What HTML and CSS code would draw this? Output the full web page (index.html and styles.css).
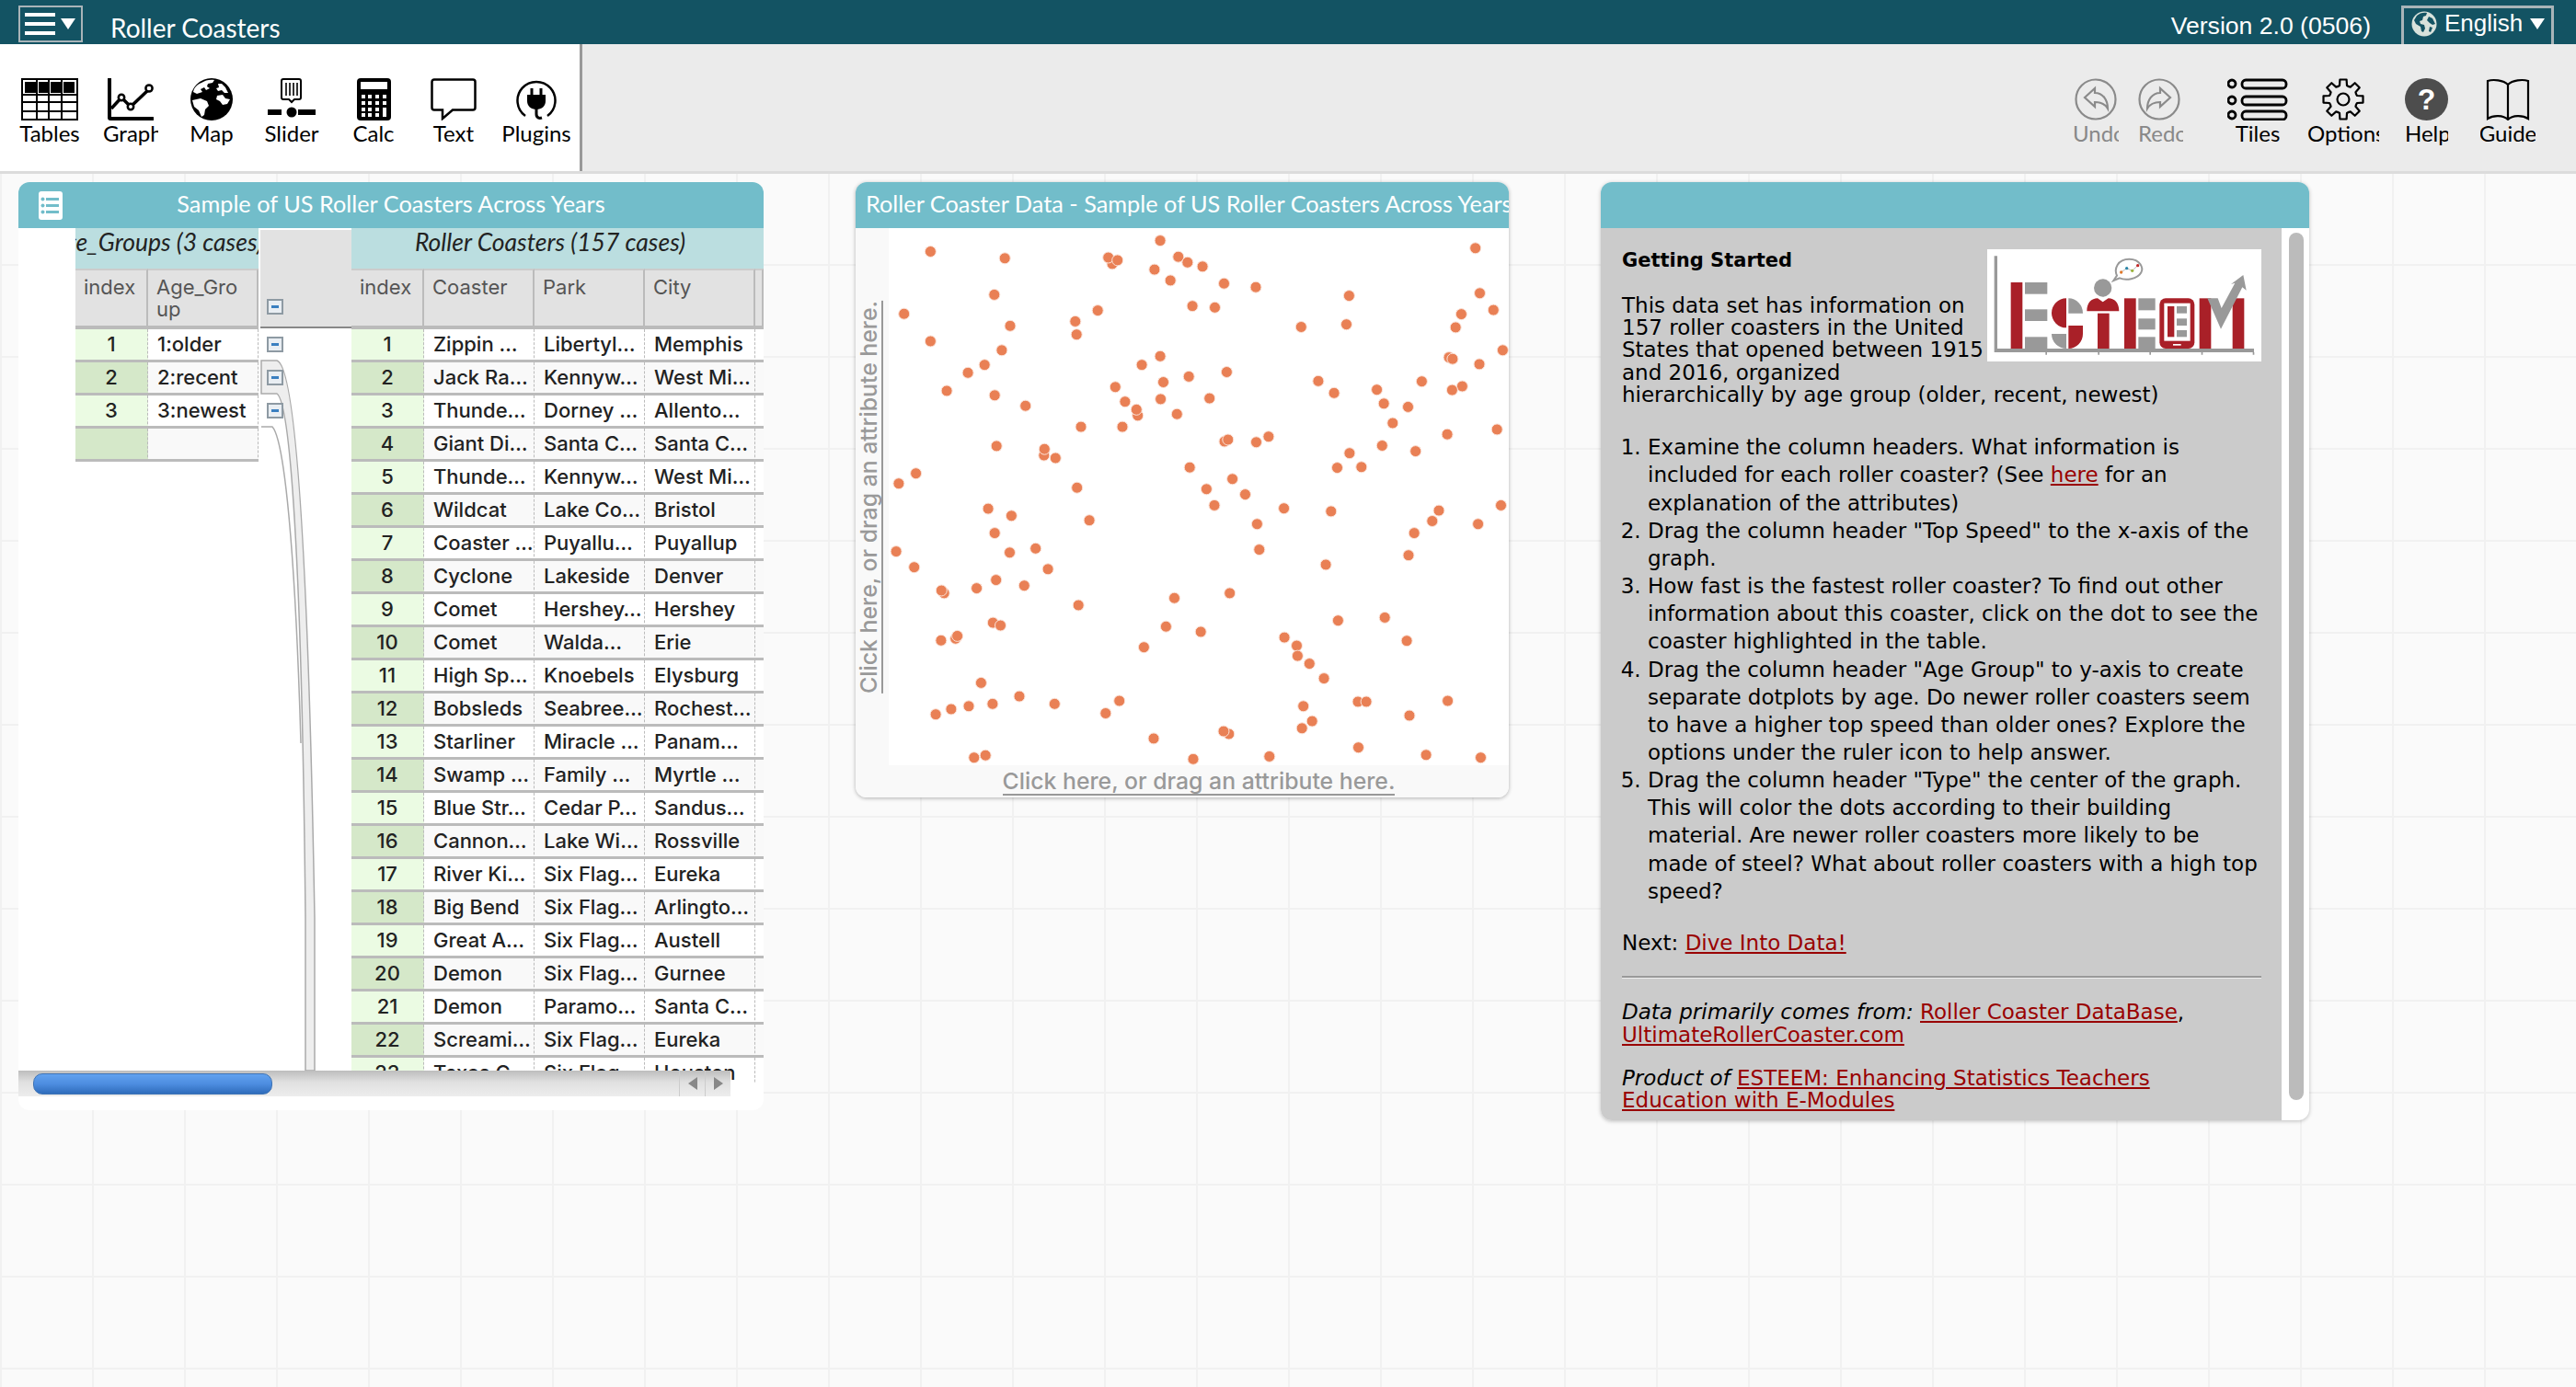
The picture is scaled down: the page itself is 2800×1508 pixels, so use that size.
FILE: index.html
```html
<!DOCTYPE html>
<html lang="en">
<head>
    <meta charset="UTF-8">
    <title>Roller Coasters</title>
    <link rel="stylesheet" href="styles.css">
</head>
<body>

    <header class="topbar">
        <button class="menu-btn" type="button">
            <span class="menu-bars"><i></i><i></i><i></i></span>
            <span class="tri"></span>
        </button>
        <div class="doc-title">Roller Coasters</div>
        <div class="version">Version 2.0 (0506)</div>
        <div class="lang">
            <svg class="lang-globe" viewBox="0 0 28 28">
                <circle cx="14" cy="14" r="13.5" fill="#d8e2dc"/>
                <path d="M6 5c3-3 8-4 11-3l-1 3-3 1-1 4-3 1 1 3 4 1 1 4-2 4-2-1-1-5-5-3-2-4z M19 6l4 2 3 6-3 1-3-2-3-3z M20 17l3 1-2 5-2-1z" fill="#135363"/>
            </svg>
            <span>English</span>
            <span class="tri"></span>
        </div>
    </header>

    <div class="toolbar">
        <div class="tool-left">
            <div class="tool tool-tables">
                <svg width="62" height="46" viewBox="0 0 62 46">
                    <rect x="1" y="1" width="60" height="44" fill="#fff" stroke="#000" stroke-width="2"/>
                    <path d="M4 4h12v12H4z M19 4h10v12H19z M32 4h11v12H32z M46 4h12v12H46z"/>
                    <path d="M0 18h62M0 26h62M0 36h62M17 18v28M30 18v28M44 18v28M17 0v18M30 0v18M44 0v18" stroke="#000" stroke-width="2"/>
                </svg>
                <span>Tables</span>
            </div>
            <div class="tool tool-graph">
                <svg width="50" height="46" viewBox="0 0 50 46">
                    <path d="M2 1V43a1 1 0 0 0 1 1H49" fill="none" stroke="#000" stroke-width="4" stroke-linecap="round"/>
                    <path d="M4 33L15 21L25 31L45 12" fill="none" stroke="#000" stroke-width="3.5"/>
                    <circle cx="15" cy="21" r="3.2" fill="#fff" stroke="#000" stroke-width="2.5"/>
                    <circle cx="25" cy="31" r="3.2" fill="#fff" stroke="#000" stroke-width="2.5"/>
                    <circle cx="45" cy="11" r="3.6" fill="#fff" stroke="#000" stroke-width="2.5"/>
                </svg>
                <span>Graph</span>
            </div>
            <div class="tool tool-map">
                <svg width="46" height="46" viewBox="0 0 46 46">
                    <circle cx="23" cy="23" r="23"/>
                    <path d="M12 5c4-3 10-4 14-3l-2 3-5 1-1 3 3 2-4 2-2-3-4 2 2 3-6 2-4-2c1-5 4-8 9-10z M30 6l4 0 4 4 3 6-4 0-3-3-4 1-2-3 3-1z M2 24l9-2 7 3 2 5-4 4-1 6-3 2-3-7-5-4z M29 19l6-1 3 4 5 1-3 5-5 1-3-4-4-2z" fill="#fff"/>
                </svg>
                <span>Map</span>
            </div>
            <div class="tool tool-slider">
                <svg width="52" height="46" viewBox="0 0 52 46">
                    <path d="M17 1h17a2 2 0 0 1 2 2v18a2 2 0 0 1-2 2h-5l-3 3-3-3h-6a2 2 0 0 1-2-2V3a2 2 0 0 1 2-2z" fill="#fff" stroke="#000" stroke-width="2"/>
                    <path d="M20 5v14M24 5v14M28 5v14M32 5v14" stroke="#000" stroke-width="1.6"/>
                    <rect x="0" y="34" width="15" height="6"/>
                    <rect x="33" y="34" width="19" height="6"/>
                    <circle cx="26" cy="37" r="5.5"/>
                </svg>
                <span>Slider</span>
            </div>
            <div class="tool tool-calc">
                <svg width="37" height="46" viewBox="0 0 37 46">
                    <rect width="37" height="46" rx="4"/>
                    <rect x="4" y="4" width="29" height="8" fill="#fff"/>
                    <g fill="#fff">
                        <rect x="5" y="18" width="4" height="4"/><rect x="12" y="18" width="4" height="4"/><rect x="20" y="18" width="4" height="4"/><rect x="28" y="18" width="4" height="4"/>
                        <rect x="5" y="25" width="4" height="4"/><rect x="12" y="25" width="4" height="4"/><rect x="20" y="25" width="4" height="4"/><rect x="28" y="25" width="4" height="4"/>
                        <rect x="5" y="32" width="4" height="4"/><rect x="12" y="32" width="4" height="4"/><rect x="20" y="32" width="4" height="4"/>
                        <rect x="5" y="38" width="4" height="4"/><rect x="12" y="38" width="4" height="4"/><rect x="20" y="38" width="4" height="4"/>
                        <rect x="28" y="32" width="4" height="10"/>
                    </g>
                </svg>
                <span>Calc</span>
            </div>
            <div class="tool tool-text">
                <svg width="50" height="46" viewBox="0 0 50 46">
                    <path d="M4 1.5h42a2.500 2.500 0 0 1 2.500 2.500v28a2.500 2.500 0 0 1-2.500 2.500H24L13 44V34.500H4A2.500 2.500 0 0 1 1.500 32V4A2.500 2.500 0 0 1 4 1.500z" fill="#fff" stroke="#000" stroke-width="2.500"/>
                </svg>
                <span>Text</span>
            </div>
            <div class="tool tool-plugins">
                <svg width="44" height="46" viewBox="0 0 44 46">
                    <path d="M10 41A20.500 20.500 0 1 1 34 41" fill="none" stroke="#000" stroke-width="2.500"/>
                    <path d="M17 11v8M27 11v8" stroke="#000" stroke-width="3"/>
                    <path d="M12 18h20v7c0 5-4 9-10 9s-10-4-10-9z"/>
                    <path d="M22 33v6c0 4 3 5 6 4" fill="none" stroke="#000" stroke-width="3"/>
                </svg>
                <span>Plugins</span>
            </div>
        </div>
        <div class="tool-right">
            <div class="tool tool-undo muted">
                <svg width="46" height="46" viewBox="0 0 46 46" fill="none" stroke="#8a8a8a" stroke-width="2.200">
                    <circle cx="23" cy="23" r="21.500"/>
                    <path d="M11 21L22 11V16C31 16 36 24 36 33C33 28 29 26 22 26V31z"/>
                </svg>
                <span>Undo</span>
            </div>
            <div class="tool tool-redo muted">
                <svg width="46" height="46" viewBox="0 0 46 46" fill="none" stroke="#8a8a8a" stroke-width="2.200">
                    <circle cx="23" cy="23" r="21.500"/>
                    <path d="M35 21L24 11V16C15 16 10 24 10 33C13 28 17 26 24 26V31z"/>
                </svg>
                <span>Redo</span>
            </div>
            <div class="tool tool-tiles">
                <svg width="66" height="46" viewBox="0 0 66 46" fill="none" stroke="#000" stroke-width="2.800">
                    <circle cx="5" cy="6" r="4"/><circle cx="5" cy="24" r="4"/><circle cx="5" cy="40" r="4"/>
                    <rect x="16" y="2" width="48" height="9" rx="4"/>
                    <rect x="16" y="20" width="48" height="9" rx="4"/>
                    <rect x="16" y="36" width="48" height="9" rx="4"/>
                </svg>
                <span>Tiles</span>
            </div>
            <div class="tool tool-options">
                <svg width="46" height="46" viewBox="-23 -23 46 46" fill="none" stroke="#000" stroke-width="2.200" stroke-linejoin="round">
                    <defs><path id="gear-tooth" d="M-6.100 -13.800L-4 -15L-3.600 -21.500H3.600L4 -15L6.100 -13.800"/></defs>
                    <use href="#gear-tooth"/>
                    <use href="#gear-tooth" transform="rotate(45)"/>
                    <use href="#gear-tooth" transform="rotate(90)"/>
                    <use href="#gear-tooth" transform="rotate(135)"/>
                    <use href="#gear-tooth" transform="rotate(180)"/>
                    <use href="#gear-tooth" transform="rotate(225)"/>
                    <use href="#gear-tooth" transform="rotate(270)"/>
                    <use href="#gear-tooth" transform="rotate(315)"/>
                    <circle r="6.500"/>
                </svg>
                <span>Options</span>
            </div>
            <div class="tool tool-help">
                <div class="help-mark">?</div>
                <span>Help</span>
            </div>
            <div class="tool tool-guide">
                <svg width="48" height="46" viewBox="0 0 48 46" fill="none" stroke="#000" stroke-width="2.200">
                    <path d="M24 7C19 2 8 1 2 3V44C8 40 19 40 24 45C29 40 40 40 46 44V3C40 1 29 2 24 7V45"/>
                </svg>
                <span>Guide</span>
            </div>
        </div>
    </div>

    <main class="canvas">

        <section class="tile tile-table">
            <div class="tile-title">
                <svg class="table-badge" width="26" height="31" viewBox="0 0 26 31">
                    <rect width="26" height="31" rx="3" fill="#fff"/>
                    <path d="M8 7h14v3H8z M8 14h14v3H8z M8 21h14v3H8z" fill="#72bdca"/>
                    <circle cx="4.500" cy="8.500" r="2" fill="#72bdca"/>
                    <circle cx="4.500" cy="15.500" r="2" fill="#72bdca"/>
                    <circle cx="4.500" cy="22.500" r="2" fill="#72bdca"/>
                </svg>
                Sample of US Roller Coasters Across Years
            </div>
            <div class="table-body">
                <div class="pane group-pane">
                    <div class="pane-title"><span>Age_Groups (3 cases)</span></div>
                    <table class="cases">
                        <colgroup><col class="col-index"><col class="col-wide"></colgroup>
                        <thead><tr><th>index</th><th>Age_Gro<br>up</th></tr></thead>
                        <tbody id="groupRows"></tbody>
                    </table>
                </div>
                <div class="gutter">
                    <div class="gutter-head"><span class="toggle"></span></div>
                    <div class="gutter-row"><span class="toggle"></span></div>
                    <div class="gutter-row"><span class="toggle"></span></div>
                    <div class="gutter-row"><span class="toggle"></span></div>
                    <svg class="gutter-lines" width="101" height="916" viewBox="0 0 101 916">
                        <path d="M3 144H20C40 150 54 350 61 750V916H51V750C47 350 34 190 20 180H3z" fill="#eee" stroke="#aaa" stroke-width="1.500"/>
                        <path d="M3 216H15C28 230 40 350 46 560" fill="none" stroke="#aaa" stroke-width="1.500"/>
                    </svg>
                </div>
                <div class="pane case-pane">
                    <div class="pane-title"><span>Roller Coasters (157 cases)</span></div>
                    <table class="cases">
                        <colgroup><col class="col-index"><col class="col-wide"><col class="col-wide"><col class="col-wide"><col class="col-rest"></colgroup>
                        <thead><tr><th>index</th><th>Coaster</th><th>Park</th><th>City</th><th></th></tr></thead>
                        <tbody id="caseRows"></tbody>
                    </table>
                </div>
            </div>
            <div class="hscroll">
                <div class="hscroll-thumb"></div>
                <div class="hscroll-btn"><i class="arrow-left"></i></div>
                <div class="hscroll-btn"><i class="arrow-right"></i></div>
            </div>
        </section>

        <section class="tile tile-graph">
            <div class="tile-title title-left">Roller Coaster Data - Sample of US Roller Coasters Across Years</div>
            <div class="graph-body">
                <div class="axis-y"><span>Click here, or drag an attribute here.</span></div>
                <svg class="plot" id="plot" width="674" height="584"></svg>
                <div class="axis-x"><span>Click here, or drag an attribute here.</span></div>
            </div>
        </section>

        <section class="tile tile-text">
            <div class="tile-title"></div>
            <div class="text-body">
                <div class="text-content">
                    <svg class="logo" width="298" height="122" viewBox="60 36 894 366">
                        <rect x="60" y="36" width="894" height="366" fill="#fff"/>
                        <path d="M83 58h10v302h837v12H83z M250 372h5v8h-5z M421 372h5v8h-5z M589 372h5v8h-5z M758 372h5v8h-5z M926 372h5v8h-5z" fill="#999"/>
                        <g fill="#a92028">
                            <rect x="137" y="144" width="38" height="216"/>
                            <path d="M318 196V292A48 48 0 0 1 318 196z"/>
                            <path d="M325 285H372V312A48 48 0 0 1 325 360z"/>
                            <path d="M385 238C385 210 400 196 420 196L437 208L455 196C475 196 490 210 490 238z"/>
                            <rect x="420" y="245" width="38" height="115"/>
                            <rect x="507" y="196" width="38" height="164"/>
                            <rect x="622" y="196" width="114" height="164" rx="20"/>
                            <rect x="752" y="196" width="38" height="164"/>
                            <rect x="860" y="196" width="38" height="164"/>
                        </g>
                        <rect x="637" y="212" width="85" height="123" fill="#fff"/>
                        <rect x="666" y="345" width="26" height="5" fill="#fff"/>
                        <rect x="648" y="222" width="22" height="100" fill="#a92028"/>
                        <g fill="#999">
                            <rect x="183" y="144" width="73" height="38"/>
                            <rect x="183" y="232" width="73" height="38"/>
                            <rect x="183" y="322" width="73" height="38"/>
                            <path d="M325 196A48 48 0 0 1 372 245H325z"/>
                            <path d="M318 312V360A48 48 0 0 1 270 312z"/>
                            <circle cx="437" cy="162" r="29"/>
                            <rect x="553" y="196" width="55" height="39"/>
                            <rect x="553" y="262" width="55" height="36"/>
                            <rect x="553" y="322" width="55" height="38"/>
                            <rect x="678" y="222" width="33" height="23"/>
                            <rect x="678" y="262" width="33" height="23"/>
                            <rect x="678" y="300" width="33" height="22"/>
                            <path d="M778 196H812L824 228L868 146L855 150L895 120L905 170L892 160L822 296z"/>
                        </g>
                        <path d="M472 138L483 122C473 100 485 68 523 68C560 68 570 98 562 112C550 135 510 138 492 130z" fill="#fff" stroke="#999" stroke-width="6"/>
                        <path d="M497 111L515 98L533 106L551 89" fill="none" stroke="#999" stroke-width="2"/>
                        <circle cx="497" cy="111" r="5" fill="#e0792c"/>
                        <circle cx="515" cy="98" r="5" fill="#2b86a8"/>
                        <circle cx="533" cy="106" r="5" fill="#9cb43a"/>
                        <circle cx="551" cy="89" r="5" fill="#c22a2a"/>
                    </svg>
                    <p class="heading">Getting Started</p>
                    <p class="intro">This data set has information on 157 roller coasters in the United States that opened between 1915 and 2016, organized<br>hierarchically by age group (older, recent, newest)</p>
                    <ol class="steps">
                        <li>Examine the column headers. What information is included for each roller coaster? (See <a href="#">here</a> for an explanation of the attributes)</li>
                        <li>Drag the column header "Top Speed" to the x-axis of the graph.</li>
                        <li>How fast is the fastest roller coaster? To find out other information about this coaster, click on the dot to see the coaster highlighted in the table.</li>
                        <li>Drag the column header "Age Group" to y-axis to create separate dotplots by age. Do newer roller coasters seem to have a higher top speed than older ones? Explore the options under the ruler icon to help answer.</li>
                        <li>Drag the column header "Type" the center of the graph. This will color the dots according to their building material. Are newer roller coasters more likely to be made of steel? What about roller coasters with a high top speed?</li>
                    </ol>
                    <p class="next">Next: <a href="#">Dive Into Data!</a></p>
                    <hr>
                    <p class="credit"><em>Data primarily comes from:</em> <a href="#">Roller Coaster DataBase</a>,<br><a href="#">UltimateRollerCoaster.com</a></p>
                    <p class="credit"><em>Product of</em> <a href="#">ESTEEM: Enhancing Statistics Teachers<br>Education with E-Modules</a></p>
                </div>
                <div class="text-scroll"><div class="text-thumb"></div></div>
            </div>
        </section>

    </main>

    <script src="script.js"></script>
</body>
</html>
```

FILE: styles.css
```css
* {
    box-sizing: border-box;
}

html, body {
    height: 100%;
    margin: 0;
    overflow: hidden;
}

body {
    display: flex;
    flex-direction: column;
    font-family: Lato, sans-serif;
    color: #000;
    background-color: #fafafa;
}

.tri {
    display: inline-block;
    width: 0;
    height: 0;
    border-left: 8px solid transparent;
    border-right: 8px solid transparent;
    border-top: 12px solid #fff;
}

/* top bar */
.topbar {
    display: flex;
    flex: none;
    align-items: flex-start;
    height: 48px;
    padding-left: 20px;
    background-color: #135363;
    color: #fff;
}

.menu-btn {
    display: flex;
    align-items: center;
    gap: 6px;
    width: 70px;
    height: 40px;
    margin-top: 6px;
    padding: 0 0 0 5px;
    border: 2px solid #a9b4b8;
    background: none;
}

.menu-bars {
    display: flex;
    flex-direction: column;
    gap: 6px;
}

.menu-bars i {
    display: block;
    width: 33px;
    height: 4px;
    background-color: #fff;
}

.doc-title {
    margin-left: 30px;
    padding-top: 13px;
    font-size: 28px;
    line-height: 34px;
}

.version {
    margin-left: auto;
    padding-top: 10px;
    font-family: "Liberation Sans", sans-serif;
    font-size: 26.600px;
    line-height: 36px;
}

.lang {
    display: flex;
    align-items: center;
    gap: 8px;
    width: 166px;
    height: 42px;
    margin: 6px 24px 0 33px;
    padding: 0 0 6px 8px;
    border: 3px solid #a9b4b8;
    border-bottom: none;
    font-family: "Liberation Sans", sans-serif;
    font-size: 26px;
}

.lang-globe {
    width: 28px;
    height: 28px;
}

/* tool shelf */
.toolbar {
    display: flex;
    flex: none;
    justify-content: space-between;
    height: 141px;
    border-bottom: 3px solid #dcdcdc;
    background-color: #ebebeb;
}

.tool-left {
    display: flex;
    width: 633px;
    padding-left: 23px;
    border-right: 3px solid #999;
    background-color: #fff;
}

.tool-right {
    display: flex;
}

.tool {
    display: flex;
    flex: none;
    flex-direction: column;
    align-items: center;
    padding-top: 37px;
    overflow: hidden;
    font-size: 24px;
    line-height: 28px;
}

.tool svg, .help-mark {
    flex: none;
    height: 46px;
}

.tool span {
    display: block;
    flex: none;
    white-space: nowrap;
}

.tool.muted {
    color: #888;
}

.tool-tables { width: 66px; margin-left: -2px; }
.tool-graph { width: 60px; margin-left: 25px; align-items: flex-start; }
.tool-graph svg { margin-left: 5px; }
.tool-map { width: 46px; margin-left: 35px; }
.tool-slider { width: 62px; margin-left: 33px; }
.tool-calc { width: 46px; margin-left: 35px; }
.tool-text { width: 50px; margin-left: 39px; }
.tool-plugins { width: 74px; margin-left: 28px; }

.tool-undo { width: 50px; }
.tool-redo { width: 49px; margin-left: 21px; align-items: flex-start; }
.tool-tiles { width: 66px; margin-left: 48px; }
.tool-options { width: 78px; margin-left: 21px; }
.tool-help { width: 47px; margin-left: 28px; }
.tool-guide { width: 60px; margin-left: 35px; margin-right: 44px; }

.tool-undo span, .tool-redo span, .tool-options span {
    align-self: flex-start;
}

.tool-options svg {
    margin-left: 16px;
    align-self: flex-start;
}

.tool-help span {
    align-self: flex-start;
}

.help-mark {
    width: 47px;
    border-radius: 50%;
    background-color: #4d4d4d;
    color: #fff;
    font-family: "Liberation Sans", sans-serif;
    font-size: 32px;
    font-weight: bold;
    line-height: 46px;
    text-align: center;
}

/* document canvas */
.canvas {
    position: relative;
    flex: 1;
    background-color: #fafafa;
    background-image: linear-gradient(#f1f1f1 2px, transparent 2px), linear-gradient(90deg, #f1f1f1 2px, transparent 2px);
    background-position: 0 98px, 0 0;
    background-size: 100px 100px;
}

.tile {
    position: absolute;
    top: 9px;
    display: flex;
    flex-direction: column;
    overflow: hidden;
    border-radius: 12px;
    background-color: #fff;
}

.tile-title {
    position: relative;
    flex: none;
    height: 50px;
    overflow: hidden;
    background-color: #72bdca;
    color: #fff;
    font-size: 25.300px;
    line-height: 46px;
    text-align: center;
    white-space: nowrap;
}

.title-left {
    padding-left: 11px;
    text-align: left;
}

/* case table */
.tile-table {
    left: 20px;
    width: 810px;
    height: 1009px;
}

.table-badge {
    position: absolute;
    top: 10px;
    left: 22px;
}

.table-body {
    display: flex;
    height: 930px;
    padding-left: 62px;
    overflow: hidden;
}

.pane {
    flex: none;
}

.group-pane {
    width: 199px;
}

.case-pane {
    width: 448px;
}

.pane-title {
    display: flex;
    justify-content: center;
    height: 44px;
    overflow: hidden;
    background-color: #bbdee0;
    color: #222;
    font-size: 26.500px;
    font-style: italic;
    line-height: 30px;
    white-space: nowrap;
}

.group-pane .pane-title {
    padding-right: 24px;
}

.case-pane .pane-title {
    padding-right: 16px;
}

.cases {
    width: 100%;
    border-collapse: separate;
    border-spacing: 0;
    table-layout: fixed;
    font-family: Inter, sans-serif;
    font-size: 22px;
}

.col-index { width: 79px; }
.col-wide { width: 120px; }
.col-rest { width: 9px; }

.cases th {
    height: 66px;
    padding: 6px 8px 0 9px;
    border-right: 2px solid #bbb;
    border-top: 2px solid #ccc;
    border-bottom: 4px solid #bbb;
    background-color: #e2e2e2;
    color: #555;
    font-size: 22px;
    font-weight: 400;
    line-height: 24px;
    text-align: left;
    vertical-align: top;
}

.cases td {
    height: 36px;
    padding: 0 0 2px 10px;
    overflow: hidden;
    border-right: 1px dashed #bbb;
    border-bottom: 3px solid #bbb;
    color: #222;
    font-weight: 500;
    line-height: 28px;
    white-space: nowrap;
}

.cases td.index {
    padding: 0 0 2px;
    background-color: #ebfbe3;
    text-align: center;
}

.cases tr:nth-child(even) td {
    background-color: #f9f9f9;
}

.cases tr:nth-child(even) td.index {
    background-color: #d5e8c9;
}

.cases td.sliver {
    padding: 0;
    background-color: #fff;
    border-right: none;
}

.gutter {
    position: relative;
    flex: none;
    width: 101px;
    padding-left: 2px;
}

.gutter-head {
    display: flex;
    align-items: flex-end;
    height: 107px;
    margin: 2px 0 0;
    padding: 0 0 13px 7px;
    border-bottom: 2px solid #888;
    background-color: #e2e2e2;
}

.gutter-row {
    height: 36px;
    padding: 9px 0 0 7px;
}

.toggle {
    position: relative;
    z-index: 1;
    display: block;
    width: 18px;
    height: 17px;
    border: 2px solid #8e9aa3;
    background-color: #e9eef3;
}

.toggle::after {
    content: "";
    position: absolute;
    top: 5px;
    left: 3px;
    width: 8px;
    height: 3px;
    background-color: #3a7fc0;
}

.gutter-lines {
    position: absolute;
    top: 0;
    left: 0;
}

/* horizontal scroller over the table */
.hscroll {
    position: absolute;
    top: 966px;
    left: 0;
    display: flex;
    align-items: center;
    width: 774px;
    height: 28px;
    padding-left: 16px;
    background: linear-gradient(#bdbdbd, #e0e0e0 45%, #ededed);
}

.hscroll-thumb {
    width: 260px;
    height: 23px;
    margin-right: auto;
    border: 1px solid #3f74b5;
    border-radius: 10px;
    background: linear-gradient(#62a2ef, #4d8de0 50%, #2f6cbb);
}

.hscroll-btn {
    display: flex;
    align-items: center;
    justify-content: center;
    width: 28px;
    height: 28px;
    border-left: 1px solid #ccc;
}

.arrow-left {
    border-top: 7px solid transparent;
    border-bottom: 7px solid transparent;
    border-right: 10px solid #888;
}

.arrow-right {
    border-top: 7px solid transparent;
    border-bottom: 7px solid transparent;
    border-left: 10px solid #888;
}

/* graph */
.tile-graph {
    left: 930px;
    width: 710px;
    height: 669px;
    box-shadow: 0 1px 4px rgba(0, 0, 0, .3);
}

.graph-body {
    display: grid;
    flex: 1;
    grid-template-columns: 36px 674px;
    grid-template-rows: 584px 35px;
    background-color: #f9f9f9;
}

.plot {
    display: block;
    background-color: #fff;
}

.plot circle {
    fill: #e98055;
    stroke: #fbe3d9;
    stroke-width: 1;
}

.axis-y, .axis-x {
    display: flex;
    align-items: center;
    justify-content: center;
    color: #999;
    font-family: Inter, sans-serif;
    font-size: 24.800px;
    font-weight: 500;
    white-space: nowrap;
}

.axis-y {
    padding-right: 6px;
}

.axis-y span, .axis-x span {
    border-bottom: 2px solid #999;
    line-height: 28px;
}

.axis-y span {
    border-bottom: none;
    border-left: 2px solid #999;
    transform: rotate(180deg);
    writing-mode: vertical-rl;
}

.axis-x {
    grid-column: 2;
}

/* text tile */
.tile-text {
    left: 1740px;
    width: 770px;
    height: 1020px;
    box-shadow: 0 1px 4px rgba(0, 0, 0, .25);
}

.text-body {
    display: flex;
    flex: 1;
    overflow: hidden;
}

.text-content {
    width: 740px;
    padding: 23px 22px 0 23px;
    background-color: #cbcbcb;
    font-family: "DejaVu Sans", sans-serif;
    font-size: 23px;
    line-height: 24.300px;
}

.text-content p {
    margin: 0;
}

.text-content a {
    color: #990000;
}

.logo {
    display: block;
    float: right;
}

.heading {
    margin-bottom: 24.500px !important;
    font-size: 21px;
    font-weight: bold;
}

.steps {
    margin: 30px 0 0;
    padding-left: 28px;
    line-height: 30.150px;
}

.next {
    margin-top: 29px !important;
}

hr {
    height: 3px;
    margin: 24px 0 24px;
    border: none;
    border-bottom: 1px solid #eee;
    background-color: #999;
}

.credit {
    margin-bottom: 23px !important;
}

.text-scroll {
    flex: 1;
    padding: 5px 6px 0 8px;
}

.text-thumb {
    height: 943px;
    border-radius: 8px;
    background-color: #bbb;
}
```

FILE: script.js
```js
// case data shown in the two table panes
var coasters = [
    ["Zippin …", "Libertyl…", "Memphis"], ["Jack Ra…", "Kennyw…", "West Mi…"],
    ["Thunde…", "Dorney …", "Allento…"], ["Giant Di…", "Santa C…", "Santa C…"],
    ["Thunde…", "Kennyw…", "West Mi…"], ["Wildcat", "Lake Co…", "Bristol"],
    ["Coaster …", "Puyallu…", "Puyallup"], ["Cyclone", "Lakeside", "Denver"],
    ["Comet", "Hershey…", "Hershey"], ["Comet", "Walda…", "Erie"],
    ["High Sp…", "Knoebels", "Elysburg"], ["Bobsleds", "Seabree…", "Rochest…"],
    ["Starliner", "Miracle …", "Panam…"], ["Swamp …", "Family …", "Myrtle …"],
    ["Blue Str…", "Cedar P…", "Sandus…"], ["Cannon…", "Lake Wi…", "Rossville"],
    ["River Ki…", "Six Flag…", "Eureka"], ["Big Bend", "Six Flag…", "Arlingto…"],
    ["Great A…", "Six Flag…", "Austell"], ["Demon", "Six Flag…", "Gurnee"],
    ["Demon", "Paramo…", "Santa C…"], ["Screami…", "Six Flag…", "Eureka"],
    ["Texas G…", "Six Flag…", "Houston"]
];

var groups = ["1:older", "2:recent", "3:newest", ""];

document.getElementById("groupRows").innerHTML = groups.map(function (g, i) {
    return `<tr><td class="index">${g ? i + 1 : ""}</td><td>${g}</td></tr>`;
}).join("");

document.getElementById("caseRows").innerHTML = coasters.map(function (c, i) {
    return `<tr><td class="index">${i + 1}</td><td>${c[0]}</td><td>${c[1]}</td><td>${c[2]}</td><td class="sliver"></td></tr>`;
}).join("");

// dot positions, in plot pixels
var dots = [
    [191,82],[360,100],[604,115],[595,98],[616,105],[713,53],[754,96],[775,111],[809,122],[700,130],[736,159],[858,167],[930,177],[1429,73],
    [336,197],[131,248],[372,280],[520,268],[571,239],[523,303],[786,227],[837,231],[1142,200],[1136,276],[1033,283],[1439,193],[1470,238],[1397,249],[1384,284],
    [191,321],[353,345],[314,384],[276,405],[228,453],[337,465],[407,493],[713,361],[671,384],[611,443],[720,430],[778,415],[864,403],[633,482],[714,475],[825,473],[662,519],[659,503],[751,515],[533,549],[627,549],[1491,345],[1369,364],[1377,368],[1438,382],[1072,427],[1108,459],[1205,450],[1307,428],[1399,441],[1376,451],[1221,487],[1276,496],[1241,539],[1365,569],[1478,556],
    [341,600],[449,625],[450,608],[475,632],[859,588],[867,583],[931,590],[959,575],[1143,619],[1217,599],[1293,614],[780,657],[1115,658],[1170,656],[877,688],[158,673],[119,700],[524,711],[818,715],[906,729],[836,758],[994,766],[1101,774],[1346,772],[1331,800],[1487,758],[1435,808],[1290,832],[322,767],[375,786],[552,798],[337,832],[933,808],
    [113,881],[154,923],[371,884],[430,873],[458,928],[938,876],[1089,916],[1277,891],[340,957],[296,979],[404,972],[222,992],[216,985],[527,1024],[745,1005],[871,992],
    [333,1071],[350,1078],[726,1081],[805,1095],[1117,1065],[1223,1057],[215,1118],[248,1113],[252,1106],[676,1136],[995,1110],[1023,1132],[1025,1159],[1052,1180],[1085,1219],[1273,1119],
    [306,1231],[203,1315],[238,1301],[278,1293],[332,1287],[393,1267],[473,1287],[620,1279],[589,1312],[1038,1293],[1162,1281],[1181,1281],[1366,1279],[1279,1318],[1058,1333],[1035,1352],[869,1367],[857,1360],[698,1379],[1163,1403],[290,1430],[316,1424],[788,1434],[961,1427],[1317,1423],[1441,1430]
];

var plot = document.getElementById("plot");
dots.forEach(function (d) {
    var c = document.createElementNS("http://www.w3.org/2000/svg", "circle");
    // measured on a crop that is 2.09x wide and 2.45x tall
    c.setAttribute("cx", (d[0] / 2.09 - 46).toFixed(1));
    c.setAttribute("cy", (d[1] / 2.45 - 8).toFixed(1));
    c.setAttribute("r", 6);
    plot.appendChild(c);
});
```
